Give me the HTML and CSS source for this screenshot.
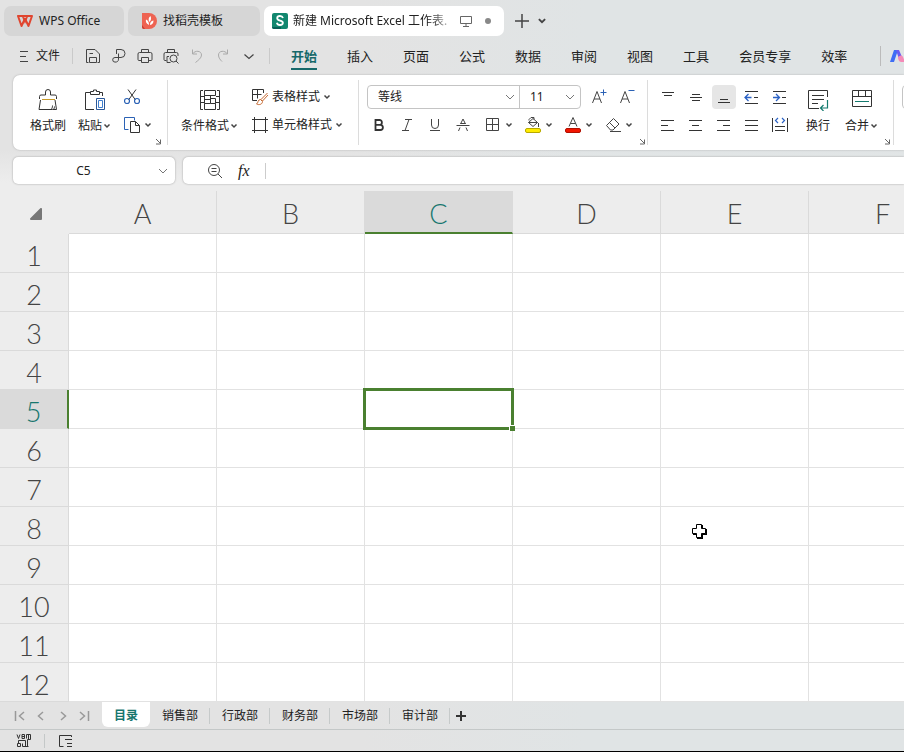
FILE: index.html
```
<!DOCTYPE html>
<html lang="zh-CN">
<head>
  <meta charset="UTF-8" />
  <title>新建 Microsoft Excel 工作表 - WPS Office</title>
  <link rel="stylesheet" href="styles.css">
</head>
<body>
  <svg class="defs" width="0" height="0" aria-hidden="true">
    <symbol id="caret" viewBox="0 0 8 8"><path d="M1.5 2.5 4 5l2.500-2.500" fill="none" stroke="#444" stroke-width="1.500"/></symbol>
    <symbol id="chevron" viewBox="0 0 10 10"><path d="M1 3l4 4 4-4" fill="none" stroke="#777"/></symbol>
    <symbol id="launcher" viewBox="0 0 7 7"><path d="M1 1l4.500 4.500M5.500 1.500v4.500h-4.500" fill="none" stroke="#666"/></symbol>
  </svg>

  <!-- Window tabs -->
  <header class="tabs">
    <a href="#" class="tab tab-home">
      <svg width="16" height="16" viewBox="0 0 16 16"><path d="M1 3h14l-3.500 10L8 5.500 4.500 13z" fill="none" stroke="#e0452f" stroke-width="2" stroke-linejoin="round"/><path d="M5.500 3 8 9l2.500-6" fill="none" stroke="#e0452f" stroke-width="1.500"/></svg>
      <span>WPS Office</span>
    </a>
    <a href="#" class="tab tab-docer">
      <svg width="16" height="16" viewBox="0 0 16 16"><path d="M1 0h7a8 8 0 0 1 0 16H3a2 2 0 0 1-2-2z" fill="#ee6352"/><path d="M1 12l3 4H3a2 2 0 0 1-2-2z" fill="#c93c30"/><path d="M8 12C5 10.500 4.500 8.500 5 6.500c2 1 3 2.500 3 5.500zM8.500 9C7 7 7.500 4.500 9.500 3c1 2.500.5 4.500-1 6zM9 12c0-2.500 1-4 3.500-4.500C12.500 10 11.500 11.500 9 12z" fill="#fff"/></svg>
      <span>找稻壳模板</span>
    </a>
    <a href="#" class="tab tab-active">
      <svg width="16" height="16" viewBox="0 0 16 16"><rect width="16" height="16" rx="2" fill="#12876f"/><path d="M0 14h9v2H2a2 2 0 0 1-2-2z" fill="#075f56"/><path d="M11 5C10.500 3.600 9.500 3 8 3 6.300 3 5.200 3.900 5.200 5.200c0 3.100 5.700 1.600 5.700 4.600 0 1.400-1.200 2.200-2.900 2.200S5.200 11.200 4.900 9.700" fill="none" stroke="#fff" stroke-width="1.800"/></svg>
      <span class="tab-title">新建 Microsoft Excel 工作表.</span>
      <svg width="12" height="12" viewBox="0 0 12 12"><path d="M.5 1.500h11v7H.5zM6 8.500V11M3 11.500h6" fill="none" stroke="#666"/></svg>
      <i class="dot"></i>
    </a>
    <button class="icon-btn" aria-label="新建"><svg width="14" height="14" viewBox="0 0 14 14"><path d="M7 0v14M0 7h14" stroke="#444" stroke-width="1.500"/></svg></button>
    <button class="icon-btn" aria-label="标签列表"><svg width="10" height="10"><use href="#caret"/></svg></button>
  </header>

  <!-- Menu -->
  <nav class="menu">
    <div class="quick">
      <button class="file-btn"><svg width="10" height="12" viewBox="0 0 10 12"><path d="M1 1.500h8M1 6.500h6M1 11.500h8" stroke="#444"/></svg>文件</button>
      <div class="quick-icons">
        <button class="icon-btn" aria-label="保存"><svg width="16" height="16" viewBox="0 0 16 16"><path d="M3.500 14.500H1.500v-13h8.500L14.500 6v8.500h-2M4.500 14.500V9.500h7v5zM4.500 5.500H8" fill="none" stroke="#444"/></svg></button>
        <button class="icon-btn" aria-label="输出"><svg width="16" height="16" viewBox="0 0 16 16"><path d="M5.500 6V1.500H10a4 4 0 0 1 0 8H4a2.300 2.300 0 0 0 0 4.600c2 0 3.500-.6 3.500-3V5.500" fill="none" stroke="#444"/></svg></button>
        <button class="icon-btn" aria-label="打印"><svg width="16" height="16" viewBox="0 0 16 16"><path d="M4.500 4.500v-3h7v3M4 12.500H2A1 1 0 0 1 1 11.500V6a1.500 1.500 0 0 1 1.500-1.500h11A1.500 1.500 0 0 1 15 6v5.500a1 1 0 0 1-1 1h-2M4.500 9.500h7v5h-7z" fill="none" stroke="#444"/></svg></button>
        <button class="icon-btn" aria-label="打印预览"><svg width="16" height="16" viewBox="0 0 16 16"><path d="M4.500 4.500v-3h7v3M3.500 12.500H2A1 1 0 0 1 1 11.500V6a1.500 1.500 0 0 1 1.500-1.500h11A1.500 1.500 0 0 1 15 6v2M6 8.500H4v6h3.500" fill="none" stroke="#444"/><circle cx="10.500" cy="10.500" r="3.500" fill="none" stroke="#444"/><path d="M13 13l2.500 2.500" stroke="#444"/></svg></button>
        <button class="icon-btn" aria-label="撤销"><svg width="16" height="16" viewBox="0 0 16 16"><path d="M3.500 1.500v4.500h4.500M3.500 6C6 2 12.500 2.500 12.500 7c0 3-3 5-6 7.500" fill="none" stroke="#aaa"/></svg></button>
        <button class="icon-btn" aria-label="恢复"><svg width="16" height="16" viewBox="0 0 16 16"><path d="M12.500 1.500v4.500H8M12.500 6C10 2 3.500 2.500 3.500 7c0 3 2 5 3.500 6.500" fill="none" stroke="#aaa"/></svg></button>
        <button class="icon-btn" aria-label="更多"><svg width="16" height="16" viewBox="0 0 16 16"><path d="M3.500 6.500 8 10.500l4.500-4" fill="none" stroke="#444" stroke-width="1.200"/></svg></button>
      </div>
    </div>
    <div class="menu-items">
      <a href="#" class="active">开始</a>
      <a href="#">插入</a>
      <a href="#">页面</a>
      <a href="#">公式</a>
      <a href="#">数据</a>
      <a href="#">审阅</a>
      <a href="#">视图</a>
      <a href="#">工具</a>
      <a href="#">会员专享</a>
      <a href="#">效率</a>
    </div>
    <a href="#" class="ai-link" aria-label="WPS AI"><svg width="18" height="12" viewBox="0 0 18 12"><path d="M0 12 4 0h4L4 12z" fill="#3f6df5"/><path d="M6 0h3l3 7-3 2z" fill="#6b5cf0"/><path d="M8 7c2-2 4-2 5 0l2 5h-4c-2 0-3-3-3-5z" fill="#f58ab8"/></svg></a>
  </nav>

  <!-- Ribbon -->
  <section class="ribbon">
    <div class="group group-clip">
      <button class="big">
        <svg width="22" height="22" viewBox="0 0 22 22"><path d="M2.500 10V7.500A1.500 1.500 0 0 1 4 6h4.500V3a2.500 2.500 0 0 1 5 0v3H18a1.500 1.500 0 0 1 1.500 1.500V10M3.500 11 2 20.500h13.500c1.500 0 2-1.500 2-3M18 11l1.500 9.500H16M14 20.500c1-1 1.500-2 1.500-4" fill="none" stroke="#333"/><path d="M5 10.500h13" stroke="#c79a2a"/></svg>
        <span>格式刷</span>
      </button>
      <button class="big">
        <svg width="22" height="22" viewBox="0 0 22 22"><path d="M6 3.500H1.500v17H10M16 3.500h2.500V7M6.500 5.500v-3h3V1h3v1.500h3v3z" fill="none" stroke="#333"/><path d="M12.500 9.500h8v11h-8z" fill="none" stroke="#2b5797"/><path d="M14.500 11.500h4v7h-4z" fill="none" stroke="#3f7fd0"/></svg>
        <span>粘贴<svg width="8" height="8"><use href="#caret"/></svg></span>
      </button>
      <div class="stack">
        <button class="small" aria-label="剪切"><svg width="18" height="18" viewBox="0 0 18 18"><path d="M5 1.500 12.500 12M13 1.500 5.500 12" stroke="#333"/><circle cx="4" cy="13" r="2.500" fill="none" stroke="#2b62b5" stroke-width="1.200"/><circle cx="14" cy="13" r="2.500" fill="none" stroke="#2b62b5" stroke-width="1.200"/></svg></button>
        <button class="small" aria-label="复制"><svg width="18" height="18" viewBox="0 0 18 18"><path d="M5.500 13.500h-4v-12h10v3" fill="none" stroke="#2b62b5"/><path d="M7.500 5.500h5l4 4v7h-9zM12.500 5.500v4h4" fill="none" stroke="#333"/></svg><svg width="8" height="8"><use href="#caret"/></svg></button>
      </div>
      <svg class="launcher" width="7" height="7"><use href="#launcher"/></svg>
    </div>

    <div class="group group-style">
      <button class="big">
        <svg width="22" height="22" viewBox="0 0 22 22"><path d="M4 1.500H1.500v19H4M18 1.500h2.500v19H18M1.500 7.500H5M1.500 13.500H5M17 7.500h3.500M17 13.500h3.500M5.500 1.500h11v5h-11zM5.500 6.500v8h6v-8M11.500 9.500h5v5h-5M5.500 14.500v6h11v-6M5.500 10.500h6" fill="none" stroke="#333"/></svg>
        <span>条件格式<svg width="8" height="8"><use href="#caret"/></svg></span>
      </button>
      <div class="stack">
        <button class="small"><svg width="18" height="18" viewBox="0 0 18 18"><path d="M6 12.500H1.500v-11h11V5M1.500 6.500h9M6.500 1.500v9" fill="none" stroke="#333"/><path d="M16.500 5 10 11.500l1.500 1.500L17 7M9.500 11.500c-3 0-2 3.500-4 4.500 3 1.500 6 0 6-2.500z" fill="none" stroke="#c4672f"/></svg><span>表格样式</span><svg width="8" height="8"><use href="#caret"/></svg></button>
        <button class="small"><svg width="18" height="18" viewBox="0 0 18 18"><path d="M3.500 1v16M14.500 1v16M1 3.500h16M1 14.500h16" stroke="#333"/></svg><span>单元格样式</span><svg width="8" height="8"><use href="#caret"/></svg></button>
      </div>
    </div>

    <div class="group group-font">
      <div class="stack">
        <div class="row">
          <div class="combo">
            <label class="combo-part font-name"><select aria-label="字体"><option>等线</option></select><svg width="10" height="10"><use href="#chevron"/></svg></label>
            <label class="combo-part font-size"><select aria-label="字号"><option>11</option></select><svg width="10" height="10"><use href="#chevron"/></svg></label>
          </div>
          <button class="tool" aria-label="增大字号"><svg width="16" height="16" viewBox="0 0 16 16"><path d="M1.500 14 6 2.500 10.500 14M3 10h6" fill="none" stroke="#444"/><path d="M9.500 3.500h6M12.500.5v6" stroke="#2b62b5"/></svg></button>
          <button class="tool" aria-label="减小字号"><svg width="16" height="16" viewBox="0 0 16 16"><path d="M1.500 14 6 2.500 10.500 14M3 10h6" fill="none" stroke="#444"/><path d="M9.500 1.500h6" stroke="#2b62b5"/></svg></button>
        </div>
        <div class="row row-format">
          <button class="tool" aria-label="加粗"><svg width="16" height="16" viewBox="0 0 16 16"><path d="M4.500 3h4a2.300 2.300 0 0 1 0 4.800h-4zM4.500 7.800h4.800a2.600 2.600 0 0 1 0 5.200H4.500z" fill="none" stroke="#333" stroke-width="1.800"/></svg></button>
          <button class="tool" aria-label="倾斜"><svg width="16" height="16" viewBox="0 0 16 16"><path d="M6 2.500h7M3 13.500h7M10 2.500 6 13.500" stroke="#444"/></svg></button>
          <button class="tool" aria-label="下划线"><svg width="16" height="16" viewBox="0 0 16 16"><path d="M4.500 2v6a3.500 3.500 0 0 0 7 0V2M3 13.500h10" fill="none" stroke="#444"/></svg></button>
          <button class="tool" aria-label="删除线"><svg width="16" height="16" viewBox="0 0 16 16"><path d="M5.500 7 8 2l2.500 5M3.500 14 5 10.500M12.500 14 11 10.500M5.500 6.500h5M1.500 8.500h13" fill="none" stroke="#444"/></svg></button>
          <button class="tool wide" aria-label="边框"><svg width="16" height="16" viewBox="0 0 16 16"><path d="M1.500 1.500h12v12h-12zM7.500 1.500v12M1.500 7.500h12" fill="none" stroke="#444"/></svg><svg width="8" height="8"><use href="#caret"/></svg></button>
          <button class="tool wide" aria-label="填充颜色"><svg width="16" height="16" viewBox="0 0 16 16"><path d="M4 3.500V2.500L6 .5h3v2M3.500 5.500 8 1.500l4.500 4L8 9.500zM3.500 5.500h9M13.500 6v4" fill="none" stroke="#444"/><rect x=".5" y="11.500" width="15" height="4" rx="1.500" fill="#ffec00" stroke="#b8a900"/></svg><svg width="8" height="8"><use href="#caret"/></svg></button>
          <button class="tool wide" aria-label="字体颜色"><svg width="16" height="16" viewBox="0 0 16 16"><path d="M4 9.500 8 .5l4 9M5.500 6.500h5" fill="none" stroke="#444"/><rect x=".5" y="11.500" width="15" height="4" rx="1.500" fill="#f21500" stroke="#b01000"/></svg><svg width="8" height="8"><use href="#caret"/></svg></button>
          <button class="tool wide" aria-label="清除"><svg width="16" height="16" viewBox="0 0 16 16"><path d="M1.500 8.500 8.500 1.500 14 7l-6 6H5.500zM4.500 5.500l5.500 5.500M5 14.500h11" fill="none" stroke="#444"/></svg><svg width="8" height="8"><use href="#caret"/></svg></button>
        </div>
      </div>
      <svg class="launcher" width="7" height="7"><use href="#launcher"/></svg>
    </div>

    <div class="group group-align">
      <div class="align-grid">
        <button class="tool" aria-label="顶端对齐"><svg width="16" height="16" viewBox="0 0 16 16"><path d="M2 3.500h12M4 6.500h8" stroke="#333"/></svg></button>
        <button class="tool" aria-label="垂直居中"><svg width="16" height="16" viewBox="0 0 16 16"><path d="M4 5.500h8M2 8.500h12M4 11.500h8" stroke="#333"/></svg></button>
        <button class="tool pressed" aria-label="底端对齐"><svg width="16" height="16" viewBox="0 0 16 16"><path d="M4 10.500h8M2 13.500h12" stroke="#333"/></svg></button>
        <button class="tool" aria-label="减少缩进"><svg width="16" height="16" viewBox="0 0 16 16"><path d="M1 2.500h13M1 14.500h13M10 8.500h4" stroke="#333"/><path d="M1 8.500h6.500M4.500 5 1 8.500 4.500 12" fill="none" stroke="#2b62c5" stroke-width="1.300"/></svg></button>
        <button class="tool" aria-label="增加缩进"><svg width="16" height="16" viewBox="0 0 16 16"><path d="M1 2.500h13M1 14.500h13M10 8.500h4" stroke="#333"/><path d="M1 8.500h6M4 5l3.500 3.500L4 12" fill="none" stroke="#2b62c5" stroke-width="1.300"/></svg></button>
        <button class="tool" aria-label="左对齐"><svg width="16" height="16" viewBox="0 0 16 16"><path d="M1 3.500h13M1 8.500h7M1 13.500h13" stroke="#333"/></svg></button>
        <button class="tool" aria-label="水平居中"><svg width="16" height="16" viewBox="0 0 16 16"><path d="M1 3.500h13M4 8.500h7M1 13.500h13" stroke="#333"/></svg></button>
        <button class="tool" aria-label="右对齐"><svg width="16" height="16" viewBox="0 0 16 16"><path d="M1 3.500h13M7 8.500h7M1 13.500h13" stroke="#333"/></svg></button>
        <button class="tool" aria-label="两端对齐"><svg width="16" height="16" viewBox="0 0 16 16"><path d="M1 3.500h13M1 8.500h13M1 13.500h13" stroke="#333"/></svg></button>
        <button class="tool" aria-label="分散对齐"><svg width="16" height="16" viewBox="0 0 16 16"><path d="M.5 1v14M15.500 1v14M3 9.500h10M3 13.500h10" stroke="#333"/><path d="M6 1 3.500 3.500 6 6M10 1l2.500 2.500L10 6" fill="none" stroke="#2b62c5" stroke-width="1.200"/></svg></button>
      </div>
      <button class="big">
        <svg width="22" height="22" viewBox="0 0 22 22"><path d="M20.500 8V1.500h-19v18H12M5 6.500h12M5 10.500h12M5 14.500h6" fill="none" stroke="#333"/><path d="M20.500 11v8h-7M16.500 16l-3 3 3 3" fill="none" stroke="#147a6e" stroke-width="1.200"/></svg>
        <span>换行</span>
      </button>
      <button class="big">
        <svg width="22" height="22" viewBox="0 0 22 22"><path d="M1.500 1.500h19v16h-19zM1.500 7.500h19M7.500 1.500v6M14.500 1.500v6" fill="none" stroke="#333"/><path d="M4 12.500h14" stroke="#147a6e"/></svg>
        <span>合并<svg width="8" height="8"><use href="#caret"/></svg></span>
      </button>
      <svg class="launcher" width="7" height="7"><use href="#launcher"/></svg>
    </div>

    <div class="group group-number">
      <select class="number-format" aria-label="数字格式"><option></option></select>
    </div>
  </section>

  <!-- Name box and formula bar -->
  <section class="formula-row">
    <label class="name-box">
      <input type="text" value="C5" aria-label="名称框">
      <svg width="10" height="10"><use href="#chevron"/></svg>
    </label>
    <div class="formula-bar">
      <svg width="16" height="16" viewBox="0 0 16 16"><circle cx="7" cy="7" r="5.500" fill="none" stroke="#444"/><path d="M11 11l4 4M4.500 5.500h5M4.500 8.500h5" stroke="#444"/></svg>
      <span class="fx">fx</span>
      <input type="text" aria-label="编辑栏">
    </div>
  </section>

  <!-- Sheet -->
  <main class="sheet">
    <table>
      <thead>
        <tr><th class="corner"><svg width="12" height="12" viewBox="0 0 12 12"><path d="M11 1v10H1z" fill="#777" stroke="#777" stroke-width="2" stroke-linejoin="round"/></svg></th><th>A</th><th>B</th><th class="current">C</th><th>D</th><th>E</th><th>F</th></tr>
      </thead>
      <tbody>
        <tr><th>1</th><td></td><td></td><td></td><td></td><td></td><td></td></tr>
        <tr><th>2</th><td></td><td></td><td></td><td></td><td></td><td></td></tr>
        <tr><th>3</th><td></td><td></td><td></td><td></td><td></td><td></td></tr>
        <tr><th>4</th><td></td><td></td><td></td><td></td><td></td><td></td></tr>
        <tr><th class="current">5</th><td></td><td></td><td class="selected"><i class="handle"></i></td><td></td><td></td><td></td></tr>
        <tr><th>6</th><td></td><td></td><td></td><td></td><td></td><td></td></tr>
        <tr><th>7</th><td></td><td></td><td></td><td></td><td></td><td></td></tr>
        <tr><th>8</th><td></td><td></td><td></td><td></td><td class="hovered"><svg class="pointer" width="16" height="16" viewBox="0 0 16 16"><path d="M5 1h6v4h4v6h-4v4H5v-4H1V5h4z" fill="#000"/><path d="M4.500.5h5v4h4v5h-4v4h-5v-4h-4v-5h4z" fill="#fff" stroke="#000"/></svg></td><td></td></tr>
        <tr><th>9</th><td></td><td></td><td></td><td></td><td></td><td></td></tr>
        <tr><th>10</th><td></td><td></td><td></td><td></td><td></td><td></td></tr>
        <tr><th>11</th><td></td><td></td><td></td><td></td><td></td><td></td></tr>
        <tr><th>12</th><td></td><td></td><td></td><td></td><td></td><td></td></tr>
      </tbody>
    </table>
  </main>

  <!-- Sheet tabs -->
  <nav class="sheet-tabs">
    <div class="sheet-nav">
      <button class="icon-btn" aria-label="第一张"><svg width="12" height="12" viewBox="0 0 12 12"><path d="M2.500 1v10M11 2 6.500 6l4.500 4" fill="none" stroke="#999" stroke-width="1.500"/></svg></button>
      <button class="icon-btn" aria-label="上一张"><svg width="12" height="12" viewBox="0 0 12 12"><path d="M8 2 3.500 6 8 10" fill="none" stroke="#999" stroke-width="1.500"/></svg></button>
      <button class="icon-btn" aria-label="下一张"><svg width="12" height="12" viewBox="0 0 12 12"><path d="M4 2l4.500 4L4 10" fill="none" stroke="#999" stroke-width="1.500"/></svg></button>
      <button class="icon-btn" aria-label="最后一张"><svg width="12" height="12" viewBox="0 0 12 12"><path d="M9.500 1v10M1 2l4.500 4L1 10" fill="none" stroke="#999" stroke-width="1.500"/></svg></button>
    </div>
    <a href="#" class="active">目录</a>
    <a href="#">销售部</a>
    <a href="#">行政部</a>
    <a href="#">财务部</a>
    <a href="#">市场部</a>
    <a href="#">审计部</a>
    <button class="icon-btn add-sheet" aria-label="新建工作表"><svg width="10" height="10" viewBox="0 0 10 10"><path d="M5 0v10M0 5h10" stroke="#333" stroke-width="2"/></svg></button>
  </nav>

  <!-- Status bar -->
  <footer class="status">
    <button class="icon-btn" aria-label="宏"><svg width="16" height="14" viewBox="0 0 16 14"><path d="M1 .5l1.500 4L4 .5M6 .5h2.500v4H6zM6 2.500h2.500M10.500 4.500v-4h4v5h-3v7h-5v-3M12.500 1v5M2.500 9.500v-3h7v6M1.500 12.500h3v-3h-3zM9.500 12.500h3" fill="none" stroke="#333"/></svg></button>
    <button class="icon-btn" aria-label="视图"><svg width="14" height="14" viewBox="0 0 14 14"><path d="M12.500 3V1.500H.5v11h4M6 5.500h7M8 9.500h5M8 12.500h5" fill="none" stroke="#333"/></svg></button>
  </footer>
</body>
</html>
```
FILE: styles.css
```
* {
  box-sizing: border-box;
  margin: 0;
  padding: 0;
}

body {
  display: flex;
  flex-direction: column;
  height: 100vh;
  overflow: hidden;
  font-family: "Noto Sans", "Noto Sans CJK SC", sans-serif;
  font-size: 12px;
  line-height: 16px;
  color: #222;
  background: linear-gradient(90deg, #e3e3e3 0%, #e3e3e3 40%, #e0e4e5 65%);
}

a {
  color: inherit;
  text-decoration: none;
}

button,
input,
select {
  font: inherit;
  color: inherit;
  border: none;
  background: none;
  outline: none;
}

svg {
  flex: none;
}

.defs {
  position: absolute;
}

button,
.icon-btn {
  display: flex;
  align-items: center;
  justify-content: center;
  white-space: nowrap;
}

/* window tabs */
.tabs {
  display: flex;
  flex: none;
  align-items: center;
  height: 41px;
  padding: 0 4px;
  gap: 4px;
}

.tab {
  display: flex;
  align-items: center;
  gap: 6px;
  height: 30px;
  padding: 0 12px 0 13px;
  border-radius: 7px;
  background: #d6d6d6;
  white-space: nowrap;
}

.tab-home { width: 120px; }
.tab-docer { width: 132px; }

.tab-active {
  gap: 5px;
  width: 240px;
  padding: 0 13px 0 8px;
  background: #fff;
}

.tab-title {
  flex: 1;
  -webkit-mask-image: linear-gradient(90deg, #000 85%, transparent);
  mask-image: linear-gradient(90deg, #000 85%, transparent);
}

.dot {
  width: 6px;
  height: 6px;
  margin: 0 0 0 8px;
  border-radius: 50%;
  background: #888;
}

.tabs .icon-btn {
  padding: 0 4px;
  margin-left: 3px;
}

.tabs .icon-btn + .icon-btn {
  margin-left: -4px;
}

/* menu */
.menu {
  display: flex;
  flex: none;
  align-items: center;
  height: 34px;
  padding-bottom: 5px;
}

.quick {
  display: flex;
  align-items: center;
  width: 270px;
  padding-left: 19px;
  border-right: 1px solid #cacaca;
}

.file-btn {
  gap: 7px;
  padding-right: 12px;
  border-right: 1px solid #cacaca;
}

.quick-icons {
  display: flex;
  gap: 10px;
  padding-left: 12px;
}

.menu-items {
  display: flex;
  gap: 30px;
  padding-left: 21px;
  font-size: 13px;
  line-height: 24px;
  white-space: nowrap;
}

.quick,
.menu-items,
.ai-link {
  flex: none;
}

.menu-items .active {
  color: #17696a;
  font-weight: bold;
  box-shadow: 0 2px #17696a;
}

.ai-link {
  display: flex;
  margin-left: 33px;
  padding: 4px 0 4px 9px;
  border-left: 1px solid #bbb;
}

/* ribbon */
.ribbon {
  display: flex;
  flex: none;
  height: 75px;
  margin-left: 13px;
  padding: 5px 0;
  border-radius: 7px 0 0 7px;
  background: #fff;
  box-shadow: 0 0 2px #aaa;
  overflow: hidden;
}

.group {
  display: flex;
  flex: none;
  align-items: center;
  padding-bottom: 3px;
  border-right: 1px solid #dcdcdc;
}

.group-clip {
  width: 155px;
  padding-left: 13px;
}

.group-style {
  width: 191px;
  padding-left: 9px;
}

.group-font {
  width: 289px;
  padding-left: 8px;
}

.group-align {
  width: 246px;
  padding-left: 6px;
}

.group-number {
  padding: 0 8px 3px;
  border-right: none;
}

.big {
  flex-direction: column;
  gap: 7px;
  padding: 0 4px;
}

.big span {
  display: flex;
  align-items: center;
  gap: 1px;
}

.group-clip .big + .big {
  margin-left: 4px;
}

.stack {
  display: flex;
  flex-direction: column;
  align-items: flex-start;
  gap: 4px;
}

.group-clip .stack {
  margin-left: 8px;
}

.group-style .stack {
  margin-left: 9px;
}

.small {
  gap: 3px;
  height: 24px;
}

.row {
  display: flex;
  align-items: center;
}

.row-format {
  gap: 4px;
}

.launcher {
  align-self: flex-end;
  margin: 0 5px -3px auto;
}

.tool {
  width: 24px;
  height: 24px;
  border-radius: 4px;
}

.tool.wide {
  width: 36px;
  gap: 4px;
  padding-left: 4px;
}

.tool.pressed {
  background: #e6e6e6;
}

.combo {
  display: flex;
  width: 214px;
  height: 24px;
  margin-right: 6px;
  border: 1px solid #c4c4c4;
  border-radius: 4px;
}

.combo + .tool {
  margin-right: 4px;
}

.combo-part {
  display: flex;
  align-items: center;
  padding-right: 4px;
}

.font-name {
  flex: 1;
}

.font-size {
  width: 61px;
  padding-right: 5px;
  border-left: 1px solid #c4c4c4;
}

.combo select {
  flex: 1;
  min-width: 0;
  padding-left: 10px;
  appearance: none;
}

.align-grid {
  display: grid;
  grid-template-columns: repeat(5, 24px);
  gap: 4px;
  margin: 0 8px 0 2px;
}

.group-align .big {
  padding: 0 6px;
}

.group-align .big + .big {
  margin-left: 3px;
}

.number-format {
  width: 100px;
  height: 24px;
  margin-bottom: 28px;
  border: 1px solid #c4c4c4;
  border-radius: 4px;
  appearance: none;
}

/* formula row */
.formula-row {
  display: flex;
  flex: none;
  gap: 8px;
  height: 41px;
  padding: 7px 0 7px 13px;
  background: linear-gradient(transparent, #ededed 80%);
}

.name-box,
.formula-bar {
  display: flex;
  align-items: center;
  background: #fff;
  border-radius: 5px;
  box-shadow: 0 0 2px #999;
}

.name-box {
  width: 162px;
  padding-right: 7px;
}

.name-box input {
  flex: 1;
  min-width: 0;
  padding-right: 4px;
  text-align: center;
}

.formula-bar {
  flex: 1;
  gap: 15px;
  padding-left: 24px;
  border-radius: 5px 0 0 5px;
}

.fx {
  font: italic 16px/16px "Liberation Serif", serif;
}

.formula-bar input {
  flex: 1;
  height: 16px;
  border-left: 1px solid #ccc;
}

/* sheet */
.sheet {
  flex: 1;
  min-height: 0;
  overflow: hidden;
  background: #fff;
}

table {
  width: 957px;
  table-layout: fixed;
  border-spacing: 0;
}

th {
  height: 39px;
  font: 300 27px/32px Lato, "Open Sans", sans-serif;
  color: #444;
  background: #ededed;
  border: 0 solid #dadada;
  border-width: 0 1px 1px 0;
}

thead th {
  height: 43px;
  padding-top: 4px;
}

tbody th {
  padding-top: 6px;
}

thead .corner {
  width: 69px;
  padding: 0 0 0 4px;
  border-color: transparent;
  line-height: 12px;
}

th.current {
  color: #17766e;
  background: #dadada;
}

thead .current {
  border-bottom: 2px solid #4a8030;
}

tbody .current {
  border-right: 2px solid #4a8030;
}

td {
  border: 0 solid #e2e2e2;
  border-width: 0 1px 1px 0;
}

.selected,
.hovered {
  position: relative;
}

.selected::after {
  content: "";
  position: absolute;
  inset: -2px;
  border: 3px solid #4a8030;
}

.handle {
  position: absolute;
  right: -3px;
  bottom: -3px;
  z-index: 1;
  width: 6px;
  height: 6px;
  border: 0 solid #fff;
  border-width: 1px 0 0 1px;
  background: #4a8030;
}

.pointer {
  position: absolute;
  left: 31px;
  top: 17px;
}

/* sheet tabs */
.sheet-tabs {
  display: flex;
  flex: none;
  align-items: center;
  height: 27px;
}

.sheet-nav {
  display: flex;
  gap: 10px;
  width: 102px;
  padding-left: 13px;
}

.sheet-tabs a {
  padding: 0 11px 0 12px;
  border-right: 1px solid #c6caca;
  white-space: nowrap;
}

.sheet-tabs .active {
  align-self: stretch;
  margin-bottom: 2px;
  padding: 6px 12px 0;
  border-right: none;
  border-radius: 0 0 6px 6px;
  background: #fff;
  color: #17766e;
  font-weight: bold;
}

.add-sheet {
  margin-left: 6px;
}

/* status bar */
.status {
  display: flex;
  flex: none;
  align-items: center;
  height: 23px;
  padding-left: 16px;
  border-top: 1px solid #c4c8c8;
  border-bottom: 1px solid #000;
}

.status .icon-btn + .icon-btn {
  margin-left: 12px;
  padding-left: 14px;
  border-left: 1px solid #c4c8c8;
}
```
